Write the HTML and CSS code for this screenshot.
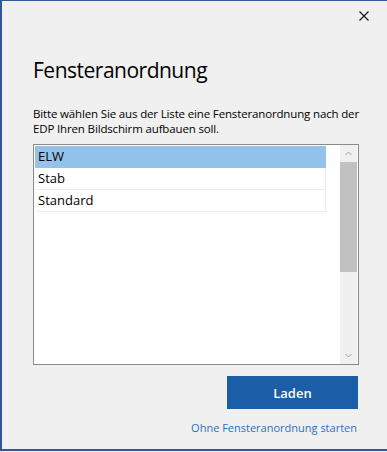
FILE: index.html
```html
<!DOCTYPE html>
<html lang="de">
<head>
  <meta charset="UTF-8" />
  <title>Fensteranordnung</title>
  <link rel="stylesheet" href="styles.css">
</head>
<body>
  <div class="dialog">
    <div class="titlebar">
      <span class="close">
        <svg width="10" height="10" viewBox="0 0 10 10"><path d="M0.5 0.5 L9.5 9.5 M9.5 0.5 L0.5 9.5" stroke="#111" stroke-width="1.1"/></svg>
      </span>
    </div>

    <h1 class="heading">Fensteranordnung</h1>
    <p class="hint">Bitte wählen Sie aus der Liste eine Fensteranordnung nach der EDP Ihren Bildschirm aufbauen soll.</p>

    <div class="listbox">
      <ul class="items">
        <li class="item selected">ELW</li>
        <li class="item">Stab</li>
        <li class="item">Standard</li>
      </ul>
      <div class="scrollbar">
        <svg class="arrow" width="17" height="17" viewBox="0 0 17 17"><path d="M5.5 10 L8.5 7 L11.5 10" fill="none" stroke="#a0a0a0" stroke-width="1"/></svg>
        <div class="thumb"></div>
        <div class="track"></div>
        <svg class="arrow" width="17" height="17" viewBox="0 0 17 17"><path d="M5.5 7 L8.5 10 L11.5 7" fill="none" stroke="#a0a0a0" stroke-width="1"/></svg>
      </div>
    </div>

    <div class="actions">
      <button class="load">Laden</button>
    </div>
    <div class="links">
      <a class="skip" href="#">Ohne Fensteranordnung starten</a>
    </div>
  </div>
</body>
</html>
```

FILE: styles.css
```css
body {
  margin: 0;
  background: #f0f0f0;
  font-family: "Open Sans", "Noto Sans", sans-serif;
  color: #000;
}

.dialog {
  box-sizing: border-box;
  height: 451px;
  border-top: 1px solid #2e5a94;
  border-left: 2px solid #2e5a94;
  border-bottom: 2px solid #2e5a94;
  padding: 0 29px 0 31px;
}

.titlebar {
  display: flex;
  justify-content: flex-end;
  height: 30px;
  margin-right: -29px;
}

.close {
  display: flex;
  align-items: center;
  justify-content: center;
  width: 46px;
  height: 29px;
}

.heading {
  margin: 25px 0 0;
  font-size: 21px;
  font-weight: 400;
  line-height: 28px;
  letter-spacing: -0.5px;
}

.hint {
  margin: 22px -20px 0 0;
  font-size: 11.5px;
  line-height: 15px;
  letter-spacing: -0.15px;
}

.listbox {
  display: flex;
  box-sizing: border-box;
  width: 326px;
  height: 221px;
  margin-top: 8px;
  border: 1px solid #8a8a8a;
  background: #fff;
}

.items {
  list-style: none;
  margin: 1px 0 0 1px;
  padding: 0;
  width: 291px;
}

.item {
  height: 21px;
  padding-left: 3px;
  border-right: 1px solid #ececec;
  border-bottom: 1px solid #ececec;
  font-size: 13px;
  font-weight: 500;
  line-height: 21px;
}

.item.selected {
  background: #93c2ea;
  border-color: #93c2ea;
}

.scrollbar {
  display: flex;
  flex-direction: column;
  width: 17px;
  margin-left: auto;
  margin-right: 1px;
  background: #f0f0f0;
}

.arrow {
  display: block;
}

.thumb {
  height: 110px;
  background: #c1c1c1;
}

.track {
  flex: 1;
}

.actions {
  display: flex;
  justify-content: flex-end;
  margin-top: 11px;
}

.load {
  width: 131px;
  height: 33px;
  border: none;
  background: #1b5ea7;
  color: #fff;
  font-family: inherit;
  font-size: 13px;
  font-weight: 600;
}

.links {
  display: flex;
  justify-content: flex-end;
  margin-top: 11px;
  padding-right: 1px;
}

.skip {
  color: #2a71c0;
  font-size: 11px;
  text-decoration: none;
}
```
